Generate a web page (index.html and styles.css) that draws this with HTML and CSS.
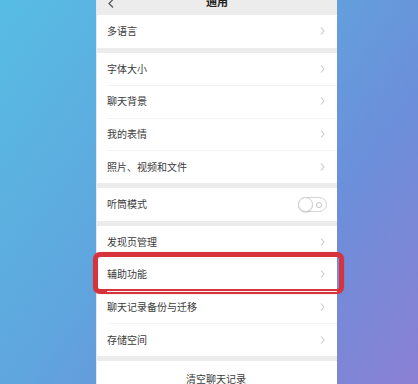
FILE: index.html
```html
<!DOCTYPE html>
<html lang="zh">
<head>
<meta charset="utf-8">
<link rel="stylesheet" href="styles.css">
</head>
<body>
<div class="stage">
  <div class="screen">
    <div class="topbar">
      <svg class="back" width="6" height="9" viewBox="0 0 6 9"><polyline points="5,0.5 1,4.5 5,8.5" fill="none" stroke="#555" stroke-width="1.2"/></svg>
      <span class="title">通用</span>
    </div>

    <div class="group">
      <div class="row"><span class="label">多语言</span><svg class="chev" width="5" height="8" viewBox="0 0 5 8"><polyline points="1,0.5 4,4 1,7.5" fill="none" stroke="#c9c9c9" stroke-width="1.1"/></svg></div>
    </div>

    <div class="group">
      <div class="row"><span class="label">字体大小</span><svg class="chev" width="5" height="8" viewBox="0 0 5 8"><polyline points="1,0.5 4,4 1,7.5" fill="none" stroke="#c9c9c9" stroke-width="1.1"/></svg></div>
      <div class="row"><span class="label">聊天背景</span><svg class="chev" width="5" height="8" viewBox="0 0 5 8"><polyline points="1,0.5 4,4 1,7.5" fill="none" stroke="#c9c9c9" stroke-width="1.1"/></svg></div>
      <div class="row"><span class="label">我的表情</span><svg class="chev" width="5" height="8" viewBox="0 0 5 8"><polyline points="1,0.5 4,4 1,7.5" fill="none" stroke="#c9c9c9" stroke-width="1.1"/></svg></div>
      <div class="row"><span class="label">照片、视频和文件</span><svg class="chev" width="5" height="8" viewBox="0 0 5 8"><polyline points="1,0.5 4,4 1,7.5" fill="none" stroke="#c9c9c9" stroke-width="1.1"/></svg></div>
    </div>

    <div class="group">
      <div class="row"><span class="label">听筒模式</span>
        <span class="switch"><span class="knob"></span><span class="off-mark"></span></span>
      </div>
    </div>

    <div class="group">
      <div class="row"><span class="label">发现页管理</span><svg class="chev" width="5" height="8" viewBox="0 0 5 8"><polyline points="1,0.5 4,4 1,7.5" fill="none" stroke="#c9c9c9" stroke-width="1.1"/></svg></div>
      <div class="row highlighted"><span class="label">辅助功能</span><svg class="chev" width="5" height="8" viewBox="0 0 5 8"><polyline points="1,0.5 4,4 1,7.5" fill="none" stroke="#c9c9c9" stroke-width="1.1"/></svg><span class="mark"></span></div>
      <div class="row"><span class="label">聊天记录备份与迁移</span><svg class="chev" width="5" height="8" viewBox="0 0 5 8"><polyline points="1,0.5 4,4 1,7.5" fill="none" stroke="#c9c9c9" stroke-width="1.1"/></svg></div>
      <div class="row"><span class="label">存储空间</span><svg class="chev" width="5" height="8" viewBox="0 0 5 8"><polyline points="1,0.5 4,4 1,7.5" fill="none" stroke="#c9c9c9" stroke-width="1.1"/></svg></div>
    </div>

    <div class="group">
      <div class="row center"><span class="label">清空聊天记录</span></div>
    </div>
  </div>
</div>
</body>
</html>
```

FILE: styles.css
```css
html, body {
  margin: 0;
  padding: 0;
}
body {
  width: 418px;
  height: 384px;
  overflow: hidden;
  font-family: "Noto Sans CJK SC", "Noto Sans", sans-serif;
}
.stage {
  width: 418px;
  height: 384px;
  padding-left: 97px;
  box-sizing: border-box;
  background: linear-gradient(125deg, #57bde3 0%, #5fa6de 40%, #6c8fda 70%, #8b7fd3 100%);
  overflow: hidden;
}
.screen {
  width: 240px;
  height: 400px;
  background: #ececec;
  display: flex;
  flex-direction: column;
  gap: 5px;
  box-shadow: -1px 0 0 #e4e8ee;
}
.topbar {
  height: 15px;
  margin-bottom: -5px;
  background: #ececec;
  display: flex;
  align-items: flex-start;
  position: relative;
}
.back {
  margin-left: 11px;
  margin-top: -1px;
}
.title {
  position: absolute;
  left: 0;
  right: 0;
  top: -5px;
  text-align: center;
  font-size: 11px;
  line-height: 12px;
  font-weight: 700;
  color: #222;
}
.group {
  background: #fff;
  display: flex;
  flex-direction: column;
}
.row {
  height: 32.6px;
  display: flex;
  align-items: center;
  justify-content: space-between;
  padding: 0 12px 0 10px;
  position: relative;
}
.row + .row::before {
  content: "";
  position: absolute;
  left: 10px;
  right: 0;
  top: 0;
  border-top: 1px solid #f4f4f4;
}
.label {
  font-size: 10px;
  line-height: 12px;
  color: #3b3b3b;
}
.center {
  justify-content: center;
  padding-top: 2px;
}
.chev {
  display: block;
}
.switch {
  width: 27px;
  height: 13px;
  border: 1px solid #d4d4d4;
  border-radius: 8px;
  position: relative;
  margin-right: -2px;
  box-sizing: content-box;
}
.knob {
  position: absolute;
  left: -1px;
  top: -1px;
  width: 13px;
  height: 13px;
  border-radius: 50%;
  background: #fff;
  border: 1px solid #cfcfcf;
  box-shadow: 0 1px 1px rgba(0,0,0,0.12);
}
.off-mark {
  position: absolute;
  right: 4px;
  top: 4px;
  width: 4px;
  height: 4px;
  border: 1px solid #c4c4c4;
  border-radius: 50%;
}
.mark {
  position: absolute;
  left: -4px;
  right: -7px;
  top: -6px;
  bottom: -3px;
  border: 5px solid #d8333c;
  border-radius: 7px;
  box-shadow: 0 0 1px rgba(150,20,30,0.5);
}
```
